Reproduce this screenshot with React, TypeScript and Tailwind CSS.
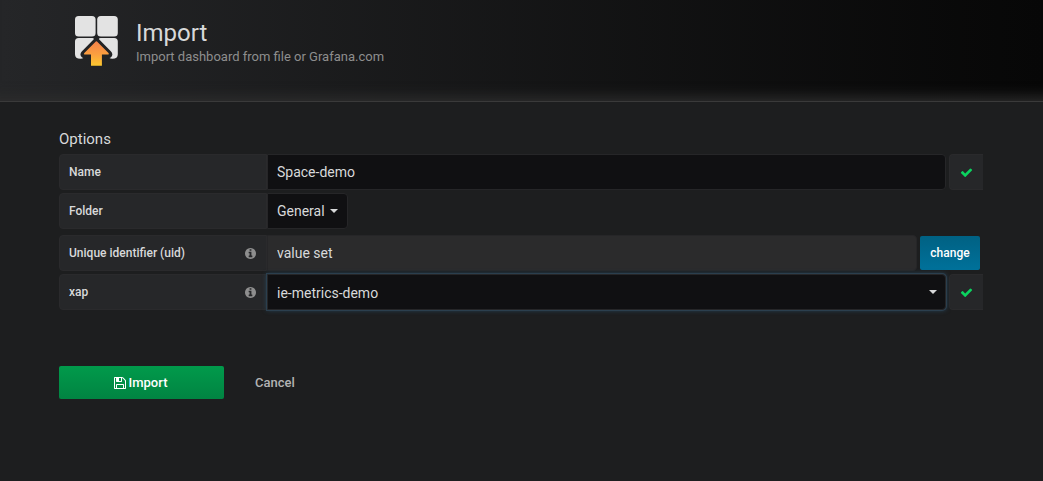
import React, { useState } from "react";

function CheckIcon() {
  return (
    <svg viewBox="0 0 1792 1792" className="size-[13px] fill-[#0bd35f]" aria-hidden="true">
      <path d="M1671 566q0 40-28 68l-724 724-136 136q-28 28-68 28t-68-28l-136-136-362-362q-28-28-28-68t28-68l136-136q28-28 68-28t68 28l294 295 656-657q28-28 68-28t68 28l136 136q28 28 28 68z" />
    </svg>
  );
}

function InfoIcon() {
  return (
    <svg viewBox="128 128 1536 1536" className="size-[11px] fill-[#8e8e8e]" aria-hidden="true">
      <path d="M1152 1376v-160q0-14-9-23t-23-9h-96v-512q0-14-9-23t-23-9h-320q-14 0-23 9t-9 23v160q0 14 9 23t23 9h96v320h-96q-14 0-23 9t-9 23v160q0 14 9 23t23 9h448q14 0 23-9t9-23zm-128-896v-160q0-14-9-23t-23-9h-192q-14 0-23 9t-9 23v160q0 14 9 23t23 9h192q14 0 23-9t9-23zm640 416q0 209-103 385.5t-279.5 279.5-385.5 103-385.5-103-279.5-279.5-103-385.5 103-385.5 279.5-279.5 385.5-103 385.5 103 279.5 279.5 103 385.5z" />
    </svg>
  );
}

function SaveIcon() {
  return (
    <svg viewBox="128 128 1536 1536" className="size-3 fill-white" aria-hidden="true">
      <path d="M512 1536h768v-384h-768v384zm896 0h128v-896q0-14-10-38.5t-20-34.5l-281-281q-10-10-34-20t-39-10v416q0 40-28 68t-68 28h-576q-40 0-68-28t-28-68v-416h-128v1280h128v-416q0-40 28-68t68-28h832q40 0 68 28t28 68v416zm-384-928v-320q0-13-9.5-22.5t-22.5-9.5h-192q-13 0-22.5 9.5t-9.5 22.5v320q0 13 9.5 22.5t22.5 9.5h192q13 0 22.5-9.5t9.5-22.5zm640 32v928q0 40-28 68t-68 28h-1344q-40 0-68-28t-28-68v-1344q0-40 28-68t68-28h928q40 0 88 20t76 48l280 280q28 28 48 76t20 88z" />
    </svg>
  );
}

function Caret() {
  return (
    <svg viewBox="0 0 8 4" className="h-1 w-2 fill-[#d8d9da]" aria-hidden="true">
      <path d="M0 0h8L4 4z" />
    </svg>
  );
}

function ImportLogo() {
  return (
    <svg viewBox="0 0 43 50" className="h-[50px] w-[43px]" aria-hidden="true">
      <defs>
        <linearGradient id="arrow" x1="0" y1="0" x2="0" y2="1">
          <stop offset="0" stopColor="#f4814b" />
          <stop offset="0.55" stopColor="#fba03f" />
          <stop offset="1" stopColor="#fdc82f" />
        </linearGradient>
      </defs>
      <g fill="#e3e3e3">
        <rect width="20.6" height="20.6" rx="3.6" />
        <rect x="22.2" width="20.6" height="20.6" rx="3.6" />
        <path d="M3.600 22h13.600q2 0 1.600 1.200L7 35.200Q4.500 38 6 40.200Q7 41.700 8.300 41.900Q7.500 42.700 5.500 42.700Q0 42.700 0 38.200V25.600Q0 22 3.600 22z" />
        <path d="M39.200 22H25.600q-2 0-1.600 1.200L35.800 35.200Q38.300 38 36.800 40.200Q35.800 41.700 34.500 41.900Q35.300 42.700 37.300 42.700Q42.800 42.700 42.800 38.200V25.600Q42.800 22 39.200 22z" />
      </g>
      <path
        d="M20.800 25.500q.6-.6 1.200 0L33.500 37q1.100 1.500-.5 1.500h-6.100v11.200H16V38.500H9.800q-1.600 0-.5-1.500z"
        fill="url(#arrow)"
      />
    </svg>
  );
}

function FieldLabel({ htmlFor, info, children }: { htmlFor: string; info?: boolean; children: React.ReactNode }) {
  return (
    <label
      htmlFor={htmlFor}
      className="flex h-9 w-52 shrink-0 items-center justify-between rounded-l-sm border border-[#2a2a2c] bg-[#262729] pr-2.5 pl-[9px] text-xs font-medium text-[#d8d9da]"
    >
      {children}
      {info && <InfoIcon />}
    </label>
  );
}

function ValidMark() {
  return (
    <span className="flex h-9 w-[34px] shrink-0 items-center justify-center rounded-l-sm border-y border-l border-[#2a2a2c] bg-[#262729]">
      <CheckIcon />
    </span>
  );
}

export default function App() {
  const [name, setName] = useState("Space-demo");
  const [source, setSource] = useState("ie-metrics-demo");

  return (
    <div className="min-h-screen bg-[#1d1e1f] font-[Roboto,sans-serif] text-sm text-[#d8d9da]">
      <header className="border-b border-[#3a3a3a] bg-linear-to-r from-[#252628] to-[#070707] px-[75px] pt-4 pb-[34px] shadow-[inset_0_-18px_14px_-14px_#2d2d2d]">
        <div className="flex gap-[18px]">
          <ImportLogo />
          <div className="pt-[3px]">
            <h1 className="text-2xl leading-7">Import</h1>
            <p className="text-[13px] leading-5 text-[#8e8e8e]">Import dashboard from file or Grafana.com</p>
          </div>
        </div>
      </header>

      <main className="px-[59px] pt-[25px]">
        <form className="pr-px" onSubmit={(e) => e.preventDefault()}>
          <h2 className="mb-[3px] text-[15px] leading-6">Options</h2>
          <div className="flex flex-col gap-[3px]">
            <div className="flex gap-[3px]">
              <div className="flex min-w-0 flex-1">
                <FieldLabel htmlFor="name">Name</FieldLabel>
                <input
                  id="name"
                  type="text"
                  value={name}
                  onChange={(e) => setName(e.target.value)}
                  className="h-9 min-w-0 flex-1 rounded-r-sm border border-[#262628] bg-[#101012] px-[9px] outline-none"
                />
              </div>
              <ValidMark />
            </div>

            <div className="mb-[3px] flex">
              <FieldLabel htmlFor="folder">Folder</FieldLabel>
              <button
                id="folder"
                type="button"
                className="flex h-9 items-center gap-[5px] rounded-r-sm border border-[#262628] bg-[#101012] px-[9px]"
              >
                General
                <Caret />
              </button>
            </div>

            <div className="flex items-center gap-[3px] pr-[3px]">
              <div className="flex min-w-0 flex-1">
                <FieldLabel htmlFor="uid" info>
                  Unique identifier (uid)
                </FieldLabel>
                <input
                  id="uid"
                  type="text"
                  value="value set"
                  readOnly
                  className="h-9 min-w-0 flex-1 rounded-r-sm border border-[#262628] bg-[#2b2b2c] px-[9px] outline-none"
                />
              </div>
              <button
                type="button"
                className="h-[34px] w-[60px] rounded-xs bg-linear-to-b from-[#006183] to-[#00719a] text-xs font-medium text-white"
              >
                change
              </button>
            </div>

            <div className="flex gap-[3px]">
              <div className="flex min-w-0 flex-1">
                <FieldLabel htmlFor="xap" info>
                  xap
                </FieldLabel>
                <div className="grid min-w-0 flex-1 items-center">
                  <select
                    id="xap"
                    value={source}
                    onChange={(e) => setSource(e.target.value)}
                    className="col-start-1 row-start-1 h-9 w-full appearance-none rounded-r-sm border border-[#262628] bg-[#101012] px-[9px] pt-0.5 shadow-[0_0_0_1px_#2b3f4e,0_0_5px_#2a4d66] outline-none"
                  >
                    <option>ie-metrics-demo</option>
                  </select>
                  <span className="pointer-events-none col-start-1 row-start-1 mr-[9px] justify-self-end">
                    <Caret />
                  </span>
                </div>
              </div>
              <ValidMark />
            </div>
          </div>

          <div className="mt-14 flex items-center">
            <button
              type="submit"
              className="flex h-[33px] w-[165px] items-center justify-center gap-[3px] rounded-xs bg-linear-to-b from-[#019a4b] to-[#018442] pt-px pr-0.5 text-[13px] font-medium text-white"
            >
              <SaveIcon />
              Import
            </button>
            <a href="#cancel" className="ml-[31px] pt-px text-[13px] font-medium text-[#b3b3b3]">
              Cancel
            </a>
          </div>
        </form>
      </main>
    </div>
  );
}
